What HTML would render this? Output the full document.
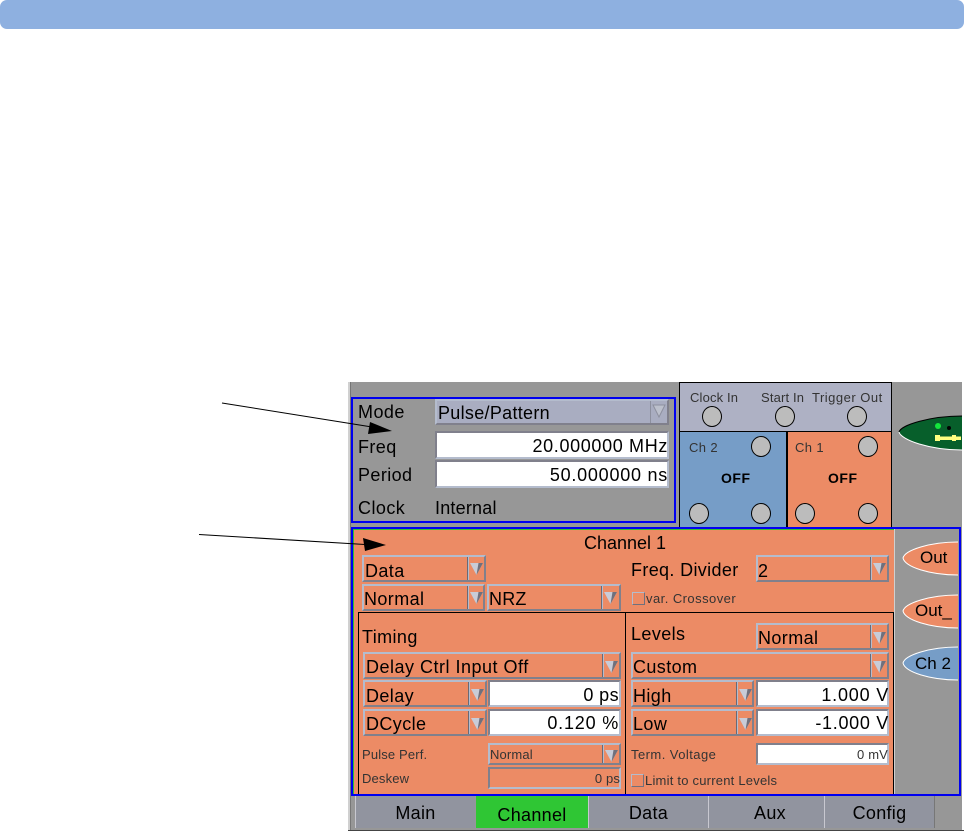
<!DOCTYPE html>
<html><head><meta charset="utf-8"><style>
html,body{margin:0;padding:0;background:#fff}
body{width:964px;height:831px;position:relative;overflow:hidden;font-family:"Liberation Sans",sans-serif;color:#000}
div,span{position:absolute;box-sizing:border-box}
.t{white-space:nowrap;font-size:18px;line-height:20px;letter-spacing:.4px}
.n{letter-spacing:.65px}
.s{white-space:nowrap;font-size:13px;line-height:14px;color:#333;letter-spacing:.15px}
.dd{border:2px solid;border-color:#b4bccd #80808c #80808c #b4bccd;background:#ec8b65}
.sep{top:0;bottom:0;width:1px;background:#6a6a76;box-shadow:1px 0 0 #b4bccd}
.v{background:#fff;border:2px solid;border-color:#80808c #b4bccd #b4bccd #80808c}
.r{text-align:right}
.c{width:20px;height:21px;border-radius:50%;background:#bcbcbc;border:1px solid #000}
.cb{width:13px;height:13px;border:1px solid;border-color:#b4bccd #70707c #70707c #b4bccd}
.tab{top:796px;height:32px;background:#91949f;border-left:1px solid #c8c8d0;text-align:center;font-size:18px;line-height:34px;letter-spacing:.3px}
</style></head><body>
<div style="left:0;top:0;width:964px;height:29px;background:#8eb0e0;border-radius:7px"></div>

<div style="left:348px;top:382px;width:614px;height:449px;background:#979797;border-left:2px solid #d0d0d0"></div>
<div style="left:350px;top:382px;width:1px;height:449px;background:#777"></div>
<div style="left:348px;top:830px;width:616px;height:1px;background:#444"></div>

<!-- top blue box -->
<div style="left:351px;top:397px;width:325px;height:126px;border:2px solid #0000f0"></div>
<div class="t" style="left:358px;top:402px;letter-spacing:.45px">Mode</div>
<div class="t" style="left:358px;top:437px">Freq</div>
<div class="t" style="left:358px;top:465px">Period</div>
<div class="t" style="left:358px;top:498px;letter-spacing:.45px">Clock</div>
<div class="t" style="left:435px;top:498px;letter-spacing:.2px">Internal</div>
<div class="dd" style="left:435px;top:399px;width:234px;height:26px;background:#a9adc1"><span class="sep" style="left:213px;background:#8d909f;box-shadow:none"></span></div>
<div class="t" style="left:438px;top:403px;letter-spacing:.3px">Pulse/Pattern</div>
<svg style="position:absolute;left:651px;top:403px" width="16" height="16"><path d="M2 2H14L8 14Z" fill="#bcc0cc" stroke="#8d909f"/></svg>
<div class="v" style="left:435px;top:431px;width:234px;height:28px"></div>
<div class="t r n" style="left:435px;top:436px;width:233px">20.000000 MHz</div>
<div class="v" style="left:435px;top:460px;width:234px;height:28px"></div>
<div class="t r n" style="left:435px;top:465px;width:233px;letter-spacing:.75px">50.000000 ns</div>

<!-- connector panel -->
<div style="left:679px;top:382px;width:213px;height:50px;background:#aeb1c4;border:1px solid #000"></div>
<div style="left:679px;top:431px;width:108px;height:97px;background:#769dc7;border:1px solid #000"></div>
<div style="left:786px;top:431px;width:106px;height:97px;background:#ec8b65;border:1px solid #000;border-left-width:2px"></div>
<div class="s" style="left:690px;top:391px">Clock In</div>
<div class="s" style="left:761px;top:391px">Start In</div>
<div class="s" style="left:812px;top:391px;letter-spacing:.5px">Trigger Out</div>
<div class="s" style="left:689px;top:441px;letter-spacing:.4px">Ch 2</div>
<div class="s" style="left:795px;top:441px;letter-spacing:.4px">Ch 1</div>
<div class="s" style="left:721px;top:470px;font-weight:bold;font-size:14px;line-height:16px;color:#000;letter-spacing:.5px">OFF</div>
<div class="s" style="left:828px;top:470px;font-weight:bold;font-size:14px;line-height:16px;color:#000;letter-spacing:.5px">OFF</div>
<div class="c" style="left:702px;top:406px"></div>
<div class="c" style="left:775px;top:406px"></div>
<div class="c" style="left:847px;top:406px"></div>
<div class="c" style="left:751px;top:436px"></div>
<div class="c" style="left:689px;top:503px"></div>
<div class="c" style="left:751px;top:503px"></div>
<div class="c" style="left:858px;top:436px"></div>
<div class="c" style="left:795px;top:503px"></div>
<div class="c" style="left:858px;top:503px"></div>

<!-- channel -->
<div style="left:351px;top:527px;width:610px;height:269px;border:2px solid #0000f0"></div>
<div style="left:353px;top:529px;width:541px;height:265px;background:#ec8b65;border-top:1px solid #30c030;border-left:1px solid #30c030"></div>
<div style="left:894px;top:529px;width:1px;height:265px;background:#d0d0d0"></div>
<div class="t" style="left:584px;top:533px;letter-spacing:0">Channel 1</div>

<div class="dd" style="left:362px;top:555px;width:124px;height:27px"><span class="sep" style="left:103px"></span></div>
<div class="t" style="left:365px;top:561px">Data</div>
<div class="dd" style="left:362px;top:584px;width:123px;height:27px"><span class="sep" style="left:103px"></span></div>
<div class="t" style="left:364px;top:589px">Normal</div>
<div class="dd" style="left:487px;top:584px;width:134px;height:27px"><span class="sep" style="left:112px"></span></div>
<div class="t" style="left:489px;top:589px;letter-spacing:.2px">NRZ</div>

<div class="t" style="left:631px;top:560px;letter-spacing:.35px">Freq. Divider</div>
<div class="dd" style="left:756px;top:555px;width:133px;height:27px"><span class="sep" style="left:112px"></span></div>
<div class="t" style="left:758px;top:561px">2</div>
<div class="cb" style="left:632px;top:592px"></div>
<div class="s" style="left:646px;top:592px;letter-spacing:.45px">var. Crossover</div>

<div style="left:358px;top:612px;width:536px;height:182px;border:1px solid #000;border-bottom:0"></div>
<div style="left:625px;top:612px;width:1px;height:182px;background:#000"></div>
<div class="t" style="left:362px;top:627px">Timing</div>
<div class="t" style="left:631px;top:624px">Levels</div>
<div class="dd" style="left:756px;top:623px;width:133px;height:27px"><span class="sep" style="left:112px"></span></div>
<div class="t" style="left:758px;top:628px">Normal</div>

<div class="dd" style="left:363px;top:652px;width:258px;height:27px"><span class="sep" style="left:237px"></span></div>
<div class="t" style="left:366px;top:657px;letter-spacing:.5px">Delay Ctrl Input Off</div>
<div class="dd" style="left:363px;top:680px;width:124px;height:27px"><span class="sep" style="left:103px"></span></div>
<div class="t" style="left:366px;top:686px">Delay</div>
<div class="v" style="left:488px;top:680px;width:133px;height:27px"></div>
<div class="t r" style="left:488px;top:685px;width:131px">0 ps</div>
<div class="dd" style="left:363px;top:709px;width:124px;height:27px"><span class="sep" style="left:103px"></span></div>
<div class="t" style="left:366px;top:714px">DCycle</div>
<div class="v" style="left:488px;top:709px;width:133px;height:27px"></div>
<div class="t r n" style="left:488px;top:713px;width:131px;letter-spacing:.8px">0.120 %</div>
<div class="s" style="left:362px;top:748px">Pulse Perf.</div>
<div class="dd" style="left:488px;top:743px;width:133px;height:22px"><span class="sep" style="left:112px"></span></div>
<div class="s" style="left:490px;top:748px">Normal</div>
<div class="s" style="left:362px;top:772px">Deskew</div>
<div class="dd" style="left:488px;top:767px;width:133px;height:22px;border-color:#80808c #b4bccd #b4bccd #80808c"></div>
<div class="s r" style="left:488px;top:772px;width:132px">0 ps</div>

<div class="dd" style="left:631px;top:652px;width:258px;height:27px"><span class="sep" style="left:237px"></span></div>
<div class="t" style="left:633px;top:657px">Custom</div>
<div class="dd" style="left:631px;top:680px;width:123px;height:27px"><span class="sep" style="left:103px"></span></div>
<div class="t" style="left:633px;top:686px">High</div>
<div class="v" style="left:756px;top:680px;width:133px;height:27px"></div>
<div class="t r" style="left:756px;top:685px;width:133px;letter-spacing:.8px">1.000 V</div>
<div class="dd" style="left:631px;top:709px;width:123px;height:27px"><span class="sep" style="left:103px"></span></div>
<div class="t" style="left:633px;top:714px">Low</div>
<div class="v" style="left:756px;top:709px;width:133px;height:27px"></div>
<div class="t r" style="left:756px;top:713px;width:133px;letter-spacing:.7px">-1.000 V</div>
<div class="s" style="left:631px;top:748px;letter-spacing:.45px">Term. Voltage</div>
<div class="v" style="left:756px;top:743px;width:133px;height:22px"></div>
<div class="s r" style="left:756px;top:748px;width:132px">0 mV</div>
<div class="cb" style="left:631px;top:774px"></div>
<div class="s" style="left:645px;top:774px;letter-spacing:.22px">Limit to current Levels</div>

<!-- tabs -->
<div class="tab" style="left:355px;width:120px">Main</div>
<div class="tab" style="left:476px;width:112px;background:#2fc634;line-height:38px;border-left:0">Channel</div>
<div class="tab" style="left:588px;width:120px">Data</div>
<div class="tab" style="left:708px;width:123px;background:#91949f">Aux</div>
<div class="tab" style="left:824px;width:111px;border-right:1px solid #777">Config</div>

<!-- svg overlays -->
<svg style="position:absolute;left:0;top:0" width="964" height="831">
<defs><g id="a"><path d="M1 3H14L7.500 15Z" fill="#c8ccd8"/><path d="M7.500 15L14 3H9.500Z" fill="#70707c"/></g></defs>
<use href="#a" x="469" y="560"/><use href="#a" x="469" y="589"/><use href="#a" x="603" y="589"/>
<use href="#a" x="872" y="560"/><use href="#a" x="872" y="629"/><use href="#a" x="604" y="658"/><use href="#a" x="872" y="658"/>
<use href="#a" x="470" y="686"/><use href="#a" x="470" y="715"/><use href="#a" x="738" y="686"/><use href="#a" x="738" y="715"/>
<use href="#a" x="604" y="747"/>
<path d="M899 432C901 425 930 416 962 416V450C930 450 901 440 899 432Z" fill="#075f2b"/>
<path d="M962 416C930 416 901 425 899 432" fill="none" stroke="#000" stroke-width="1"/>
<path d="M899 432C901 440 930 450 962 450" fill="none" stroke="#fff" stroke-width="1"/>
<circle cx="938" cy="426" r="3" fill="#14e63c"/><circle cx="949" cy="428" r="2" fill="#000"/>
<path d="M935 436.500H961V440H935Z" fill="#ffff80"/><rect x="935" y="435" width="5" height="6" fill="#ffff80"/><rect x="952" y="435" width="4" height="6" fill="#ffff80"/>
<path d="M903 558C905 550 930 542 958 542V575C930 575 905 567 903 558Z" fill="#ec8b65"/>
<path d="M958 542C930 542 905 550 903 558C905 567 930 575 958 575" fill="none" stroke="#fff"/>
<path d="M903 611C905 603 930 595 958 595V628C930 628 905 620 903 611Z" fill="#ec8b65"/>
<path d="M958 595C930 595 905 603 903 611C905 620 930 628 958 628" fill="none" stroke="#fff"/>
<path d="M903 663C905 655 930 647 958 647V680C930 680 905 672 903 663Z" fill="#769dc7"/>
<path d="M958 647C930 647 905 655 903 663C905 672 930 680 958 680" fill="none" stroke="#fff"/>
<path d="M222 403L372 427" stroke="#000" stroke-width="1"/>
<path d="M370 422L392 431L368 434Z" fill="#000"/>
<path d="M199 534.500L365 544.500" stroke="#000" stroke-width="1"/>
<path d="M363 538L386 545L365 551Z" fill="#000"/>
<text x="920" y="563" font-family="Liberation Sans" font-size="17">Out</text>
<text x="915" y="616" font-family="Liberation Sans" font-size="17">Out_</text>
<text x="915" y="669" font-family="Liberation Sans" font-size="17">Ch 2</text>
</svg>
</body></html>
